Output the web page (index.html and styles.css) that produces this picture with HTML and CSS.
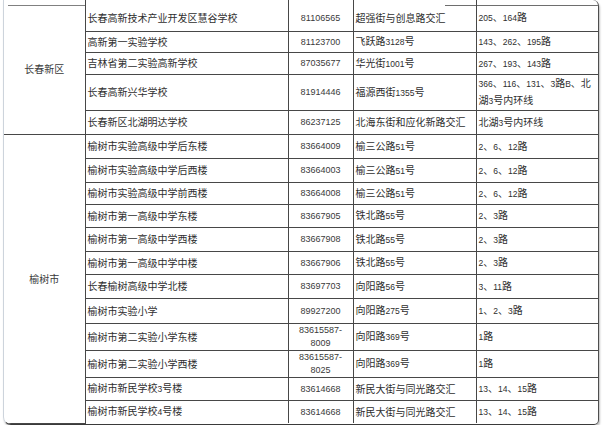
FILE: index.html
```html
<!DOCTYPE html>
<html lang="zh-CN">
<head>
<meta charset="utf-8">
<title>考点学校</title>
<link rel="stylesheet" href="styles.css">
</head>
<body>
<div class="frame">
<table class="sheet">
<colgroup>
<col class="c-region"><col class="c-school"><col class="c-phone"><col class="c-addr"><col class="c-bus">
</colgroup>
<tbody>
<tr class="first h31">
<td rowspan="5" class="region region-top">长春新区</td>
<td>长春高新技术产业开发区慧谷学校</td><td class="phone">81106565</td><td class="addr-top">超强街与创息路交汇</td><td class="bus-top"><span class="n">205</span>、<span class="n">164</span>路</td>
</tr>
<tr class="h21">
<td>高新第一实验学校</td><td class="phone">81123700</td><td>飞跃路<span class="n">3128</span>号</td><td><span class="n">143</span>、<span class="n">262</span>、<span class="n">195</span>路</td>
</tr>
<tr class="h22">
<td>吉林省第二实验高新学校</td><td class="phone">87035677</td><td>华光街<span class="n">1001</span>号</td><td><span class="n">267</span>、<span class="n">193</span>、<span class="n">143</span>路</td>
</tr>
<tr class="h36">
<td>长春高新兴华学校</td><td class="phone">81914446</td><td>福源西街<span class="n">1355</span>号</td><td class="two"><span class="n">366</span>、<span class="n">116</span>、<span class="n">131</span>、<span class="n">3</span>路<span class="n">B</span>、北<br>湖<span class="n">3</span>号内环线</td>
</tr>
<tr class="h24 sec-end">
<td>长春新区北湖明达学校</td><td class="phone">86237125</td><td>北海东街和应化新路交汇</td><td>北湖<span class="n">3</span>号内环线</td>
</tr>
<tr class="h24">
<td rowspan="12" class="region">榆树市</td>
<td>榆树市实验高级中学后东楼</td><td class="phone">83664009</td><td>榆三公路<span class="n">51</span>号</td><td><span class="n">2</span>、<span class="n">6</span>、<span class="n">12</span>路</td>
</tr>
<tr class="h24">
<td>榆树市实验高级中学后西楼</td><td class="phone">83664003</td><td>榆三公路<span class="n">51</span>号</td><td><span class="n">2</span>、<span class="n">6</span>、<span class="n">12</span>路</td>
</tr>
<tr class="h22">
<td>榆树市实验高级中学前西楼</td><td class="phone">83664008</td><td>榆三公路<span class="n">51</span>号</td><td><span class="n">2</span>、<span class="n">6</span>、<span class="n">12</span>路</td>
</tr>
<tr class="h23">
<td>榆树市第一高级中学东楼</td><td class="phone">83667905</td><td>铁北路<span class="n">55</span>号</td><td><span class="n">2</span>、<span class="n">3</span>路</td>
</tr>
<tr class="h24">
<td>榆树市第一高级中学西楼</td><td class="phone">83667908</td><td>铁北路<span class="n">55</span>号</td><td><span class="n">2</span>、<span class="n">3</span>路</td>
</tr>
<tr class="h23">
<td>榆树市第一高级中学中楼</td><td class="phone">83667906</td><td>铁北路<span class="n">55</span>号</td><td><span class="n">2</span>、<span class="n">3</span>路</td>
</tr>
<tr class="h24">
<td>长春榆树高级中学北楼</td><td class="phone">83697703</td><td>向阳路<span class="n">56</span>号</td><td><span class="n">3</span>、<span class="n">11</span>路</td>
</tr>
<tr class="h25">
<td>榆树市实验小学</td><td class="phone">89927200</td><td>向阳路<span class="n">275</span>号</td><td><span class="n">1</span>、<span class="n">2</span>、<span class="n">3</span>路</td>
</tr>
<tr class="h27">
<td>榆树市第二实验小学东楼</td><td class="phone two">83615587-<br>8009</td><td>向阳路<span class="n">369</span>号</td><td><span class="n">1</span>路</td>
</tr>
<tr class="h27">
<td>榆树市第二实验小学西楼</td><td class="phone two">83615587-<br>8025</td><td>向阳路<span class="n">369</span>号</td><td><span class="n">1</span>路</td>
</tr>
<tr class="h23">
<td>榆树市新民学校<span class="n">3</span>号楼</td><td class="phone">83614668</td><td>新民大街与同光路交汇</td><td><span class="n">13</span>、<span class="n">14</span>、<span class="n">15</span>路</td>
</tr>
<tr class="h23 last">
<td>榆树市新民学校<span class="n">4</span>号楼</td><td class="phone">83614668</td><td>新民大街与同光路交汇</td><td><span class="n">13</span>、<span class="n">14</span>、<span class="n">15</span>路</td>
</tr>
</tbody>
</table>
</div>
</body>
</html>
```
FILE: styles.css
```css
html, body {
  margin: 0;
  padding: 0;
  background: #ffffff;
}

body {
  font-family: "Noto Sans CJK SC", "Liberation Sans", sans-serif;
  color: #2e2e2e;
}

.frame {
  margin-left: 3px;
  width: 594px;
  border-left: 1px solid #cdd4dc;
  border-right: 1px solid #4e4e4e;
  border-bottom: 1px solid #3a3a3a;
  border-radius: 0 6px 5px 8px;
  box-shadow: 1px 2px 2px rgba(0, 0, 0, 0.25);
  overflow: hidden;
}

.sheet {
  width: 594px;
  border-collapse: collapse;
  table-layout: fixed;
  font-size: 10px;
  line-height: 12px;
}

.c-region { width: 81px; }
.c-school { width: 203px; }
.c-phone { width: 65px; }
.c-addr { width: 123px; }
.c-bus { width: 122px; }

.sheet td {
  border: 1px solid #474747;
  padding: 0 2px;
  vertical-align: middle;
  white-space: nowrap;
  overflow: hidden;
}

.sheet tr:first-child td { border-top: none; }
.sheet tr td:first-child { border-left: none; }
.sheet tr td:last-child { border-right: none; }
.sheet tr.last td { border-bottom: none; }

.first td { padding-top: 5px; }

.h21 { height: 21px; }
.h22 { height: 22px; }
.h23 { height: 23px; }
.h24 { height: 24px; }
.h25 { height: 25px; }
.h27 { height: 27px; }
.h31 { height: 31px; }
.h36 { height: 36px; }

.region {
  text-align: center;
  color: #3a3a3a;
  font-size: 10px;
  border-left: none;
}

.region-top {
  border-bottom: 1px solid #474747;
  background: linear-gradient(#808080, #808080) no-repeat 4px 5px / 100% 1px;
}

.addr-top {
  background: linear-gradient(#6e6e6e, #6e6e6e) no-repeat right 0 top 5px / 31px 1px;
}

.bus-top {
  background: linear-gradient(#6e6e6e, #6e6e6e) no-repeat 0 5px / 100% 1px;
}

.phone {
  text-align: center;
  font-family: "Liberation Sans", sans-serif;
  font-size: 9px;
  color: #3a3a3a;
  padding-left: 4px;
}

.phone.two {
  line-height: 13px;
}

.two {
  line-height: 15px;
}

.n {
  font-family: "Liberation Sans", sans-serif;
  font-size: 8.5px;
}
```
